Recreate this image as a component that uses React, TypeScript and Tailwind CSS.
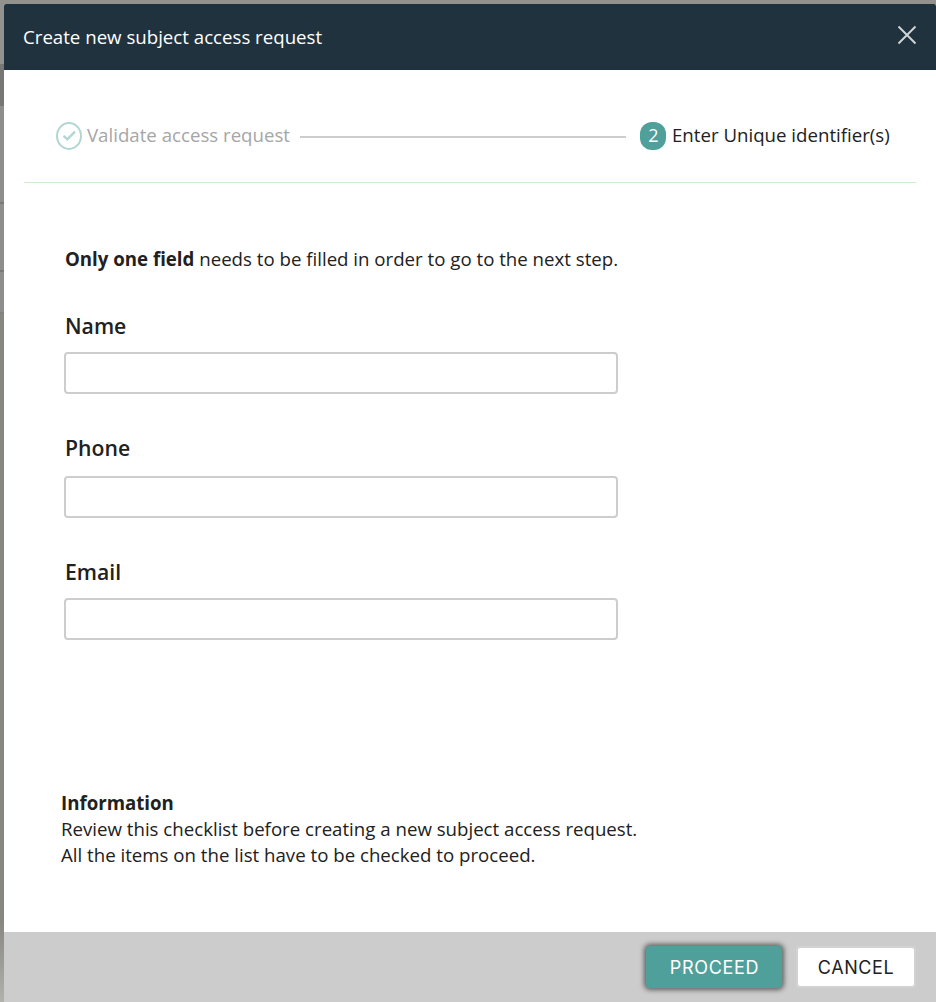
const fields = [
  { label: 'Name', gap: 'mt-[10px]' },
  { label: 'Phone', gap: 'mt-[12px]' },
  { label: 'Email', gap: 'mt-[10px]' },
];

function Backdrop() {
  return (
    <div className="flex w-1 shrink-0 flex-col">
      <div className="h-[60px] bg-[#929290]" />
      <div className="h-[42px] bg-[#777775]" />
      <div className="h-[96px] bg-[#8e8e8d]" />
      <div className="h-[2px] bg-[#797978]" />
      <div className="h-[66px] bg-[#8e8e8d]" />
      <div className="h-[2px] bg-[#797978]" />
      <div className="h-[40px] bg-[#8e8e8d]" />
      <div className="h-[2px] bg-[#81817f]" />
      <div className="h-[606px] bg-[#878680]" />
      <div className="flex-1 bg-gradient-to-b from-[#878680] to-[#b1b1ae]" />
    </div>
  );
}

export default function App() {
  return (
    <div className="flex h-[1002px] w-[936px] flex-col overflow-hidden bg-[#91908c] font-['Open_Sans',sans-serif] text-[18.66px] text-[#212121]">
      <div className="h-1 shrink-0 bg-[#92918c]" />
      <div className="flex min-h-0 flex-1">
        <Backdrop />
        <div className="flex flex-1 flex-col overflow-hidden rounded-t-[2px] bg-white">
          <header className="flex h-[66px] items-center justify-between bg-[#20323e] pr-[19px] pl-[19px] text-white">
            <h1>Create new subject access request</h1>
            <button aria-label="Close" className="-mt-1 text-[#d3d6d8]">
              <svg width="20" height="20" viewBox="0 0 20 20" fill="none" stroke="currentColor" strokeWidth="1.9">
                <path d="M1.5 1.5 18.5 18.5M18.5 1.5 1.5 18.5" />
              </svg>
            </button>
          </header>

          <nav className="mx-5 flex h-[113px] items-start border-b border-[#cdeccb] pt-[52px] pr-[26px] pl-8">
            <div className="flex h-7 items-center">
              <svg width="26" height="28" viewBox="0 0 26 28" fill="none" stroke="#b1d7d2" strokeWidth="2">
                <ellipse cx="13" cy="14" rx="12" ry="13" />
                <path d="m7.5 13.7 3.8 3.7 7.7-7.8" strokeWidth="2.3" />
              </svg>
              <span className="-mt-0.5 ml-[5px] w-[203px] whitespace-nowrap text-[#a6a6a6]">Validate access request</span>
            </div>
            <div className="mx-[10px] mt-[14px] h-[2px] flex-1 bg-[#cdcdcd]" />
            <div className="ml-1 flex h-7 items-center">
              <span className="flex h-7 w-[26px] items-start justify-center rounded-[12px] bg-[#4fa09a] pl-px text-[18px] leading-[26px] font-medium text-white">2</span>
              <span className="-mt-0.5 ml-[6px] w-[218px] whitespace-nowrap">Enter Unique identifier(s)</span>
            </div>
          </nav>

          <main className="flex flex-1 flex-col pt-[63px] pl-[60px]">
            <p className="ml-px h-[26px] leading-[26px] whitespace-nowrap">
              <strong className="font-bold">Only one field</strong> needs to be filled in order to go to the next step.
            </p>
            {fields.map((f) => (
              <label key={f.label} className="flex flex-col pt-[38px]">
                <span className="ml-px h-8 text-[21.2px] leading-8 font-semibold">{f.label}</span>
                <input className={`h-[42px] w-[554px] rounded-[4px] border-2 border-[#cdcdcd] bg-white px-3 outline-none ${f.gap}`} />
              </label>
            ))}
            <section className="mt-[150px] -ml-[3px] leading-[26px] whitespace-nowrap">
              <h2 className="font-bold">Information</h2>
              <p>Review this checklist before creating a new subject access request.</p>
              <p>All the items on the list have to be checked to proceed.</p>
            </section>
          </main>

          <footer className="flex h-[70px] items-center justify-end gap-[14px] bg-[#cccccc] pr-5 font-['Inter',sans-serif] text-[18px] tracking-[0.6px]">
            <button className="h-[42px] w-[136px] rounded-[4px] bg-[#4fa09a] pl-px tracking-[0.7px] text-white shadow-[0_0_5px_2px_#606060]">PROCEED</button>
            <button className="h-[42px] w-[120px] rounded-[4px] border-2 border-[#d2d2d2] bg-white">CANCEL</button>
          </footer>
        </div>
      </div>
    </div>
  );
}
